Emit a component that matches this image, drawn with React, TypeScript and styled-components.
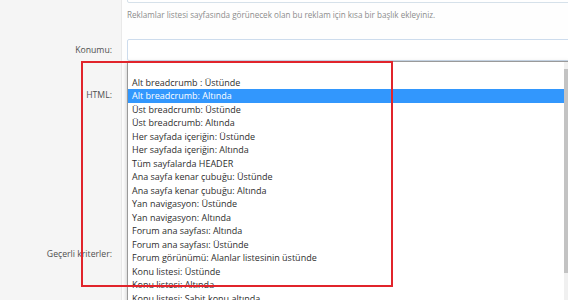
import React from 'react';
import styled, { createGlobalStyle } from 'styled-components';

const GlobalStyle = createGlobalStyle`
  html, body {
    margin: 0;
    padding: 0;
    background: #fff;
    overflow: hidden;
  }
  body {
    font-family: "Open Sans", "Noto Sans", sans-serif;
  }
`;

const Page = styled.div`
  position: relative;
  width: 568px;
  height: 300px;
  overflow: hidden;
  background: #fefefe;
`;

// page is scrolled a little, the title input sits mostly above the fold
const Form = styled.div`
  margin-top: -21px;
`;

const Row = styled.div`
  display: grid;
  grid-template-columns: 122px 1fr;
`;

const Label = styled.div<{ $top?: number }>`
  box-sizing: border-box;
  padding: ${p => p.$top ?? 0}px 9px 0 0;
  background: #f5f5f5;
  border-right: 1px solid #e9e9e9;
  text-align: right;
  font-size: 8.7px;
  line-height: 14px;
  color: #4f4f4f;
  white-space: nowrap;
`;

const Field = styled.div<{ $top?: number; $bottom?: number }>`
  min-width: 0;
  padding: ${p => p.$top ?? 0}px 0 ${p => p.$bottom ?? 0}px 5px;
`;

const TextInput = styled.div`
  box-sizing: border-box;
  height: 24px;
  margin-right: -12px;
  border: 1px solid #d6e1ea;
  border-radius: 2px;
  background: #fff;
`;

const Hint = styled.div`
  margin-top: 6px;
  font-size: 8.1px;
  line-height: 11px;
  color: #8c8c8c;
  white-space: nowrap;
`;

const SelectWrap = styled.div`
  position: relative;
  z-index: 2;
`;

const SelectBox = styled.div`
  box-sizing: border-box;
  height: 22px;
  margin-right: -12px;
  border: 1px solid #cddced;
  border-radius: 2px;
  background: #fff;
`;

const Dropdown = styled.div`
  position: absolute;
  top: 100%;
  left: 0;
  right: -1px;
  height: 260px;
  display: flex;
  border: 1px solid #9a9a9a;
  background: #fff;
  box-shadow: 0 2px 5px rgba(0, 0, 0, 0.25);
  overflow: hidden;
`;

const OptionList = styled.div`
  flex: 1;
  min-width: 0;
`;

const Option = styled.div<{ $selected?: boolean }>`
  height: 13.5px;
  line-height: 13.5px;
  padding-left: 4px;
  font-size: 9px;
  white-space: nowrap;
  color: ${p => (p.$selected ? '#fff' : '#2e2e2e')};
  background: ${p => (p.$selected ? '#3297fd' : 'transparent')};
`;

const ScrollTrack = styled.div`
  width: 4px;
  background: #f0f0f0;
`;

const ScrollThumb = styled.div`
  margin-top: 7px;
  height: 204px;
  background: #c3c3c3;
`;

const TextArea = styled.div`
  box-sizing: border-box;
  height: 150px;
  margin-right: -12px;
  border: 1px solid #d6e1ea;
  background: #fff;
`;

const Highlight = styled.div`
  position: absolute;
  left: 81px;
  top: 61px;
  width: 312px;
  height: 226px;
  box-sizing: border-box;
  border: 2px solid #e1242b;
  z-index: 5;
  pointer-events: none;
`;

const options = [
  '',
  'Alt breadcrumb : Üstünde',
  'Alt breadcrumb: Altında',
  'Üst breadcrumb: Üstünde',
  'Üst breadcrumb: Altında',
  'Her sayfada içeriğin: Üstünde',
  'Her sayfada içeriğin: Altında',
  'Tüm sayfalarda HEADER',
  'Ana sayfa kenar çubuğu: Üstünde',
  'Ana sayfa kenar çubuğu: Altında',
  'Yan navigasyon: Üstünde',
  'Yan navigasyon: Altında',
  'Forum ana sayfası: Altında',
  'Forum ana sayfası: Üstünde',
  'Forum görünümü: Alanlar listesinin üstünde',
  'Konu listesi: Üstünde',
  'Konu listesi: Altında',
  'Konu listesi: Sabit konu altında',
  'Konu görünümü: Üstünde',
];

const selectedIndex = 2;

export default function App() {
  return (
    <Page>
      <GlobalStyle />
      <Form>
        <Row>
          <Label />
          <Field $bottom={19}>
            <TextInput />
            <Hint>
              Reklamlar listesi sayfasında görünecek olan bu reklam için kısa bir başlık ekleyiniz.
            </Hint>
          </Field>
        </Row>
        <Row>
          <Label $top={4}>Konumu:</Label>
          <Field $bottom={10}>
            <SelectWrap>
              <SelectBox />
              <Dropdown>
                <OptionList>
                  {options.map((o, i) => (
                    <Option key={i} $selected={i === selectedIndex}>
                      {o}
                    </Option>
                  ))}
                </OptionList>
                <ScrollTrack>
                  <ScrollThumb />
                </ScrollTrack>
              </Dropdown>
            </SelectWrap>
          </Field>
        </Row>
        <Row>
          <Label $top={17}>HTML:</Label>
          <Field $top={10} $bottom={10}>
            <TextArea />
          </Field>
        </Row>
        <Row>
          <Label $top={6}>Geçerli kriterler:</Label>
          <Field $top={6}>
            <TextArea />
          </Field>
        </Row>
      </Form>
      <Highlight />
    </Page>
  );
}
